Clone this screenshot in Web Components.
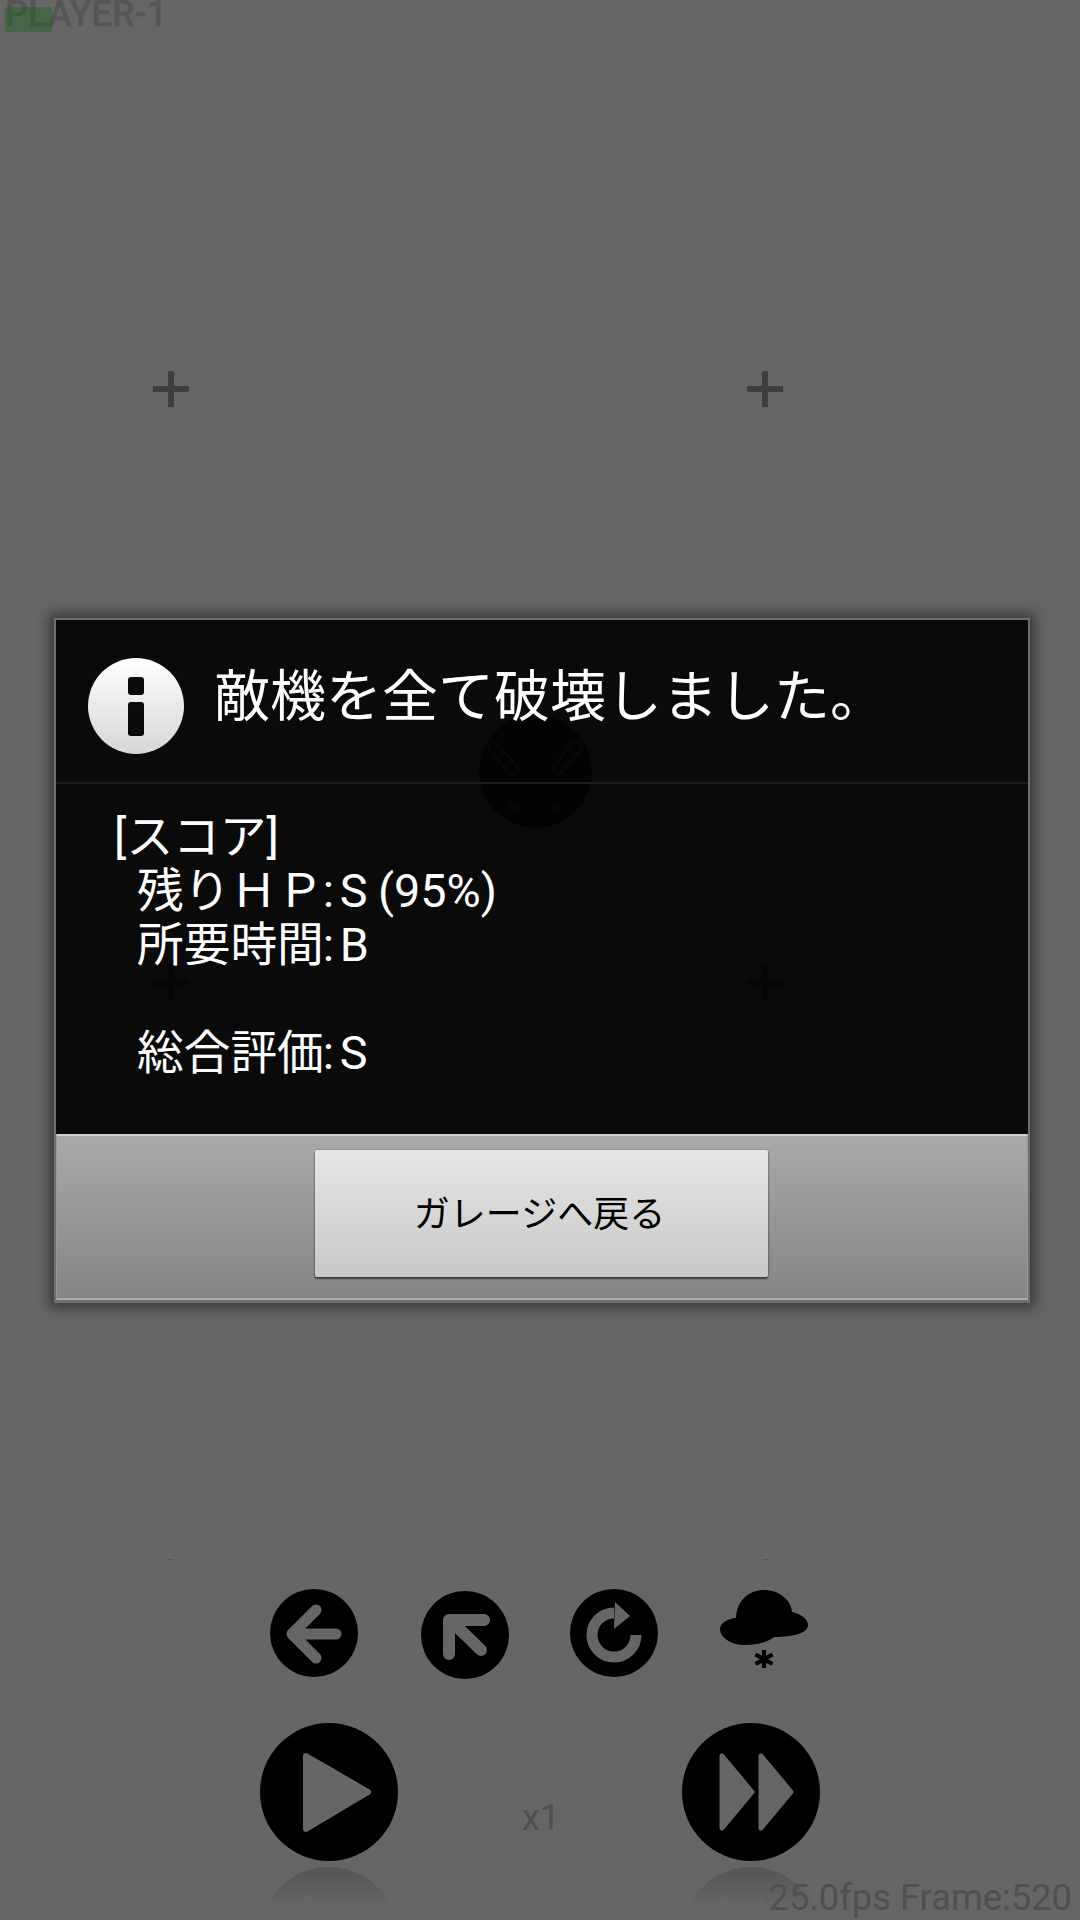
<!DOCTYPE html>
<html lang="ja">
<head>
<meta charset="utf-8">
<title>Result</title>
<style>
  html, body { margin: 0; padding: 0; background: #666; }
</style>
</head>
<body>
<game-stage>
  <player-tag slot="scene">PLAYER-1</player-tag>
  <aim-marker slot="scene" style="left:153px;top:371px"></aim-marker>
  <aim-marker slot="scene" style="left:747px;top:371px"></aim-marker>
  <aim-marker slot="scene" style="left:153px;top:965px"></aim-marker>
  <aim-marker slot="scene" style="left:747px;top:965px"></aim-marker>
  <aim-marker slot="scene" tip style="left:168px;top:1559px"></aim-marker>
  <aim-marker slot="scene" tip style="left:762px;top:1559px"></aim-marker>
  <enemy-unit slot="scene" style="left:479px;top:715px"></enemy-unit>
  <hud-text slot="scene">25.0fps Frame:520</hud-text>

  <control-panel>
    <game-button slot="tools" icon="back"></game-button>
    <game-button slot="tools" icon="corner" style="margin:2px 0 0 63px"></game-button>
    <game-button slot="tools" icon="retry" style="margin-left:61px"></game-button>
    <game-button slot="tools" icon="cloud" style="margin-left:62px"></game-button>
    <game-button slot="speed" icon="play" big></game-button>
    <speed-label slot="speed">x1</speed-label>
    <game-button slot="speed" icon="forward" big></game-button>
  </control-panel>

  <result-dialog slot="overlay">
    <span slot="title">敵機を全て破壊しました。</span>
    <score-line>[スコア]</score-line>
    <score-line indent label="残りＨＰ">S (95%)</score-line>
    <score-line indent label="所要時間">B</score-line>
    <score-line></score-line>
    <score-line indent label="総合評価">S</score-line>
    <dialog-button slot="actions">ガレージへ戻る</dialog-button>
  </result-dialog>
</game-stage>

<script>
const UI_FONT = `Roboto, "Noto Sans CJK JP", sans-serif`;

class StageElement extends HTMLElement {
  constructor() {
    super();
    this._root = this.attachShadow({ mode: 'open' });
  }

  getStyle() {
    return ':host { display: block; }';
  }

  getMarkup() {
    return '<slot></slot>';
  }

  connectedCallback() {
    this._render();
  }

  _render() {
    this._root.innerHTML = `<style>${this.getStyle()}</style>${this.getMarkup()}`;
  }
}

class GameStage extends StageElement {
  getStyle() {
    return `
      :host {
        display: flex;
        flex-direction: column;
        justify-content: flex-end;
        position: relative;
        width: 1080px;
        height: 1920px;
        overflow: hidden;
        background: #666;
        font-family: ${UI_FONT};
      }
    `;
  }

  getMarkup() {
    return `<slot name="scene"></slot><slot></slot><slot name="overlay"></slot>`;
  }
}

class PlayerTag extends StageElement {
  getStyle() {
    return `
      :host {
        position: absolute;
        left: 5px;
        top: -7px;
        font-size: 36px;
        line-height: 42px;
        font-weight: 500;
        -webkit-text-stroke: 0.3px #555;
        color: #555;
        white-space: nowrap;
      }
      .bar {
        position: absolute;
        left: 0;
        top: 14px;
        width: 47px;
        height: 25px;
        background: rgba(0, 100, 0, 0.3);
      }
    `;
  }

  getMarkup() {
    return `<slot></slot><div class="bar"></div>`;
  }
}

class AimMarker extends StageElement {
  getStyle() {
    return `
      :host {
        position: absolute;
        width: 36px;
        height: 36px;
        background:
          linear-gradient(#3f3f3f, #3f3f3f) 15px 0 / 6px 36px no-repeat,
          linear-gradient(#3f3f3f, #3f3f3f) 0 15px / 36px 6px no-repeat;
      }
      :host([tip]) {
        width: 6px;
        height: 1px;
        background: #555;
      }
    `;
  }

  getMarkup() {
    return '';
  }
}

class EnemyUnit extends StageElement {
  getStyle() {
    return `
      :host { position: absolute; width: 113px; height: 113px; }
      svg { display: block; }
    `;
  }

  getMarkup() {
    return `
      <svg width="113" height="113" viewBox="0 0 113 113">
        <circle cx="56.5" cy="56.5" r="56.5" fill="#1c2a1c"/>
        <g fill="none" stroke="#5a5a5a" stroke-width="2">
          <rect x="-5" y="-20" width="10" height="40" rx="5" transform="translate(24 43) rotate(-41)"/>
          <rect x="-5" y="-20" width="10" height="40" rx="5" transform="translate(88 43) rotate(41)"/>
        </g>
        <circle cx="35" cy="93" r="5" fill="#4a4a4a"/>
        <circle cx="77" cy="93" r="5" fill="#4a4a4a"/>
      </svg>
    `;
  }
}

class HudText extends StageElement {
  getStyle() {
    return `
      :host {
        position: absolute;
        right: 8px;
        top: 1877px;
        font-size: 36.3px;
        line-height: 42px;
        color: #4f4f4f;
        white-space: nowrap;
      }
    `;
  }
}

const BUTTON_ICONS = {
  back: `
    <circle cx="44" cy="44" r="44" fill="#000"/>
    <path d="M66 45H24M46 21L22 45L46 69" fill="none" stroke="#666" stroke-width="11" stroke-linecap="round" stroke-linejoin="round"/>`,
  corner: `
    <circle cx="44" cy="44" r="44" fill="#000"/>
    <path d="M28 63V29H63M29 29L60 59" fill="none" stroke="#666" stroke-width="12" stroke-linecap="round" stroke-linejoin="round"/>`,
  retry: `
    <circle cx="44" cy="44" r="44" fill="#000"/>
    <path d="M66 46A22 22 0 1 1 44 24" fill="none" stroke="#666" stroke-width="11"/>
    <polygon points="45,13 60,27 44,40" fill="#666"/>`,
  cloud: `
    <path d="M16 29C17 10 30 1 44 1C58 1 71 10 72 23C82 25 88 31 88 36C88 44 74 48 54 48C46 54 36 56 26 56C10 56 0 48 0 40C0 35 6 30 16 29Z" fill="#000"/>
    <path d="M44 61V79M35.5 65.5L52.5 75M52.5 65.5L35.5 75" stroke="#000" stroke-width="4.2"/>`,
};

const BIG_ICONS = {
  play: `<path d="M46 33L108 69L46 106Z" fill="#666" stroke="#666" stroke-width="6" stroke-linejoin="round"/>`,
  forward: `<path d="M40 33L70 69L40 105ZM79 33L109 69L79 105Z" fill="#666" stroke="#666" stroke-width="5" stroke-linejoin="round"/>`,
};

class GameButton extends StageElement {
  getStyle() {
    return `
      :host { display: block; flex: none; width: 88px; height: 88px; }
      :host([big]) { width: 138px; height: 197px; }
      svg { display: block; }
    `;
  }

  getMarkup() {
    const icon = this.getAttribute('icon');
    if (!this.hasAttribute('big')) {
      return `<svg width="88" height="88" viewBox="0 0 88 88">${BUTTON_ICONS[icon]}</svg>`;
    }
    const face = `<circle cx="69" cy="69" r="69" fill="#000"/>${BIG_ICONS[icon]}`;
    return `
      <svg width="138" height="197" viewBox="0 0 138 197">
        <defs>
          <linearGradient id="fade" gradientUnits="userSpaceOnUse" x1="0" y1="144" x2="0" y2="184">
            <stop offset="0" stop-color="#fff" stop-opacity="0.17"/>
            <stop offset="1" stop-color="#fff" stop-opacity="0"/>
          </linearGradient>
          <mask id="shine" maskUnits="userSpaceOnUse" x="0" y="140" width="138" height="57">
            <rect x="0" y="140" width="138" height="57" fill="url(#fade)"/>
          </mask>
        </defs>
        ${face}
        <g mask="url(#shine)"><g transform="translate(0 282) scale(1 -1)">${face}</g></g>
      </svg>
    `;
  }
}

class SpeedLabel extends StageElement {
  getStyle() {
    return `
      :host {
        display: block;
        flex: none;
        width: 32px;
        margin: 74px 128px 0 124px;
        font-size: 36px;
        line-height: 42px;
        color: #4f4f4f;
      }
    `;
  }
}

class ControlPanel extends StageElement {
  getStyle() {
    return `
      :host {
        display: flex;
        flex-direction: column;
        gap: 44px;
        height: 331px;
        flex: none;
      }
      .tools, .speed { display: flex; align-items: flex-start; }
      .tools { height: 90px; padding-left: 270px; }
      .speed { padding-left: 260px; }
    `;
  }

  getMarkup() {
    return `
      <div class="tools"><slot name="tools"></slot></div>
      <div class="speed"><slot name="speed"></slot></div>
    `;
  }
}

class ScoreLine extends StageElement {
  getStyle() {
    return `
      :host {
        display: flex;
        height: 54px;
        white-space: nowrap;
        word-spacing: -1px;
      }
      :host([indent]) { padding-left: 23px; }
      .colon { width: 16px; text-indent: -1px; }
    `;
  }

  getMarkup() {
    const label = this.getAttribute('label');
    const head = label ? `<span>${label}</span><span class="colon">:</span>` : '';
    return `${head}<span><slot></slot></span>`;
  }
}

class ResultDialog extends StageElement {
  getStyle() {
    return `
      :host {
        position: absolute;
        inset: 0;
        display: flex;
        align-items: center;
        justify-content: center;
        padding-left: 4px;
        padding-top: 1px;
      }
      .frame {
        width: 972px;
        border: solid 2px #6e6e6e;
        border-bottom-width: 3px;
        box-shadow: 0 0 12px 5px rgba(0, 0, 0, 0.45);
      }
      .head {
        display: flex;
        align-items: center;
        gap: 30px;
        height: 162px;
        padding-left: 32px;
        background: rgba(0, 0, 0, 0.9);
        border-bottom: solid 2px #1f1f1f;
      }
      .mark {
        position: relative;
        flex: none;
        width: 96px;
        height: 96px;
        margin-top: 9px;
        border-radius: 50%;
        background: linear-gradient(#fff, #d6d6d6);
      }
      .mark i {
        position: absolute;
        left: 40px;
        width: 16px;
        border-radius: 3px;
        background: #0a0a0a;
      }
      .mark i:first-child { top: 19px; height: 18px; }
      .mark i:last-child { top: 44px; height: 34px; }
      .title {
        font-size: 56px;
        line-height: 64px;
        margin-top: -9px;
        color: #fff;
        white-space: nowrap;
      }
      .body {
        height: 350px;
        box-sizing: border-box;
        padding: 26px 0 0 58px;
        background: rgba(0, 0, 0, 0.9);
        font-size: 46.7px;
        line-height: 54px;
        color: #fff;
      }
      .actions {
        display: flex;
        justify-content: center;
        height: 166px;
        padding: 14px 1px 0 0;
        box-sizing: border-box;
        background: linear-gradient(#aaa, #848484);
        border-top: solid 2px #cfcfcf;
        border-bottom: solid 2px #aaa;
        border-left: solid 1px #999;
        border-right: solid 1px #999;
      }
    `;
  }

  getMarkup() {
    return `
      <div class="frame">
        <div class="head">
          <div class="mark"><i></i><i></i></div>
          <div class="title"><slot name="title"></slot></div>
        </div>
        <div class="body"><slot></slot></div>
        <div class="actions"><slot name="actions"></slot></div>
      </div>
    `;
  }
}

class DialogButton extends StageElement {
  getStyle() {
    return `
      :host {
        display: flex;
        align-items: center;
        justify-content: center;
        box-sizing: border-box;
        width: 453px;
        height: 127px;
        padding: 0 4px 6px 0;
        border-radius: 2px;
        background: linear-gradient(#e6e6e6, #c8c8c8);
        box-shadow: 0 2px 2px rgba(0, 0, 0, 0.55), 0 0 2px rgba(0, 0, 0, 0.4);
        font-size: 36px;
        color: #000;
      }
    `;
  }
}

customElements.define('game-stage', GameStage);
customElements.define('player-tag', PlayerTag);
customElements.define('aim-marker', AimMarker);
customElements.define('enemy-unit', EnemyUnit);
customElements.define('hud-text', HudText);
customElements.define('game-button', GameButton);
customElements.define('speed-label', SpeedLabel);
customElements.define('control-panel', ControlPanel);
customElements.define('score-line', ScoreLine);
customElements.define('result-dialog', ResultDialog);
customElements.define('dialog-button', DialogButton);
</script>
</body>
</html>
